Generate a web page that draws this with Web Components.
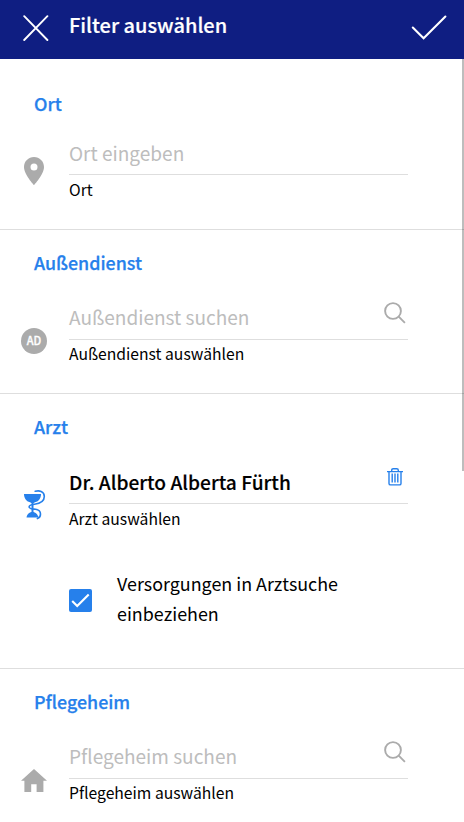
<!DOCTYPE html>
<html lang="de">
<head>
<meta charset="utf-8">
<title>Filter auswählen</title>
<style>
html,body{margin:0;height:100%;overflow:hidden;background:#fff}
body{font-family:"Noto Sans CJK SC","Noto Sans",sans-serif;color:#000}
</style>
</head>
<body>
<filter-page></filter-page>
<script>
const define=(name,html)=>{
  const t=document.createElement('template');
  t.innerHTML=html;
  customElements.define(name,class extends HTMLElement{
    constructor(){super();this.attachShadow({mode:'open'}).append(t.content.cloneNode(true));}
  });
};

define('app-bar',`<style>
:host{display:flex;height:59px;background:#0f1e82;color:#fff;box-sizing:border-box;padding:0 17px 0 23px}
svg{display:block;flex:none}
.close{margin-top:15px}
.ok{margin:15px 0 0 auto}
.t{margin-left:20px;margin-top:9px;font-size:20px;line-height:32px;font-weight:500;-webkit-text-stroke:.2px;white-space:nowrap}
</style>
<svg class="close" width="26" height="26" viewBox="0 0 26 26" fill="none" stroke="#fff" stroke-width="1.9" stroke-linecap="round"><path d="M1.2 1.2 24.4 25M24.4 1.2 1.2 25"/></svg>
<span class="t"><slot></slot></span>
<svg class="ok" width="36" height="26" viewBox="0 0 36 26" fill="none" stroke="#fff" stroke-width="2.1" stroke-linecap="round"><path d="M1.8 12.6 12.6 23.3 34.4 1.5"/></svg>`);

define('filter-section',`<style>
:host{display:block;padding:20px 0 27px;border-bottom:1px solid #dedede}
.h{padding:0 0 1px 34px;font-size:17.85px;line-height:24px;height:24px;font-weight:500;-webkit-text-stroke:.25px;color:#2680eb;white-space:nowrap}
</style><div class="h"><slot name="title"></slot></div><slot></slot>`);

define('filter-field',`<style>
:host{display:grid;grid-template-columns:69px 339px;margin-top:22px}
.icon{padding-top:var(--icon-top,32px);padding-left:var(--icon-left,21px)}
.input{display:flex;height:var(--input-h,42px);border-bottom:1px solid #dedede;align-items:center;justify-content:space-between;font-size:19.05px;line-height:28px;color:#bdbdbd;white-space:nowrap}
.text{padding-bottom:2px}
:host([filled]) .input{color:#000;font-weight:500;font-size:19.15px;-webkit-text-stroke:.15px}
:host([filled]) .text{padding-bottom:0}
.hint{margin-top:var(--hint-gap,2px);font-size:15.7px;line-height:24px;height:24px;white-space:nowrap}
</style>
<div class="icon"><slot name="icon"></slot></div>
<div><div class="input"><span class="text"><slot></slot></span><slot name="action"></slot></div><div class="hint"><slot name="hint"></slot></div></div>`);

define('icon-pin',`<style>:host,svg{display:block}</style>
<svg width="20" height="28" viewBox="0 0 20 28"><path fill="#ababab" fill-rule="evenodd" d="M10 0C4.4 0 0 4.4 0 9.9 0 17.3 10 28 10 28s10-10.7 10-18.1C20 4.4 15.6 0 10 0Zm0 13.4a3.5 3.5 0 1 1 0-7 3.5 3.5 0 0 1 0 7Z"/></svg>`);

define('icon-badge',`<style>:host{display:flex;width:26px;height:26px;border-radius:50%;background:#ababab;color:#fff;font-size:11px;line-height:25px;font-weight:500;-webkit-text-stroke:.3px;align-items:center;justify-content:center}span{height:26px}</style><span><slot></slot></span>`);

define('icon-cup',`<style>:host,svg{display:block}</style>
<svg width="22" height="30" viewBox="0 0 22 30"><g fill="#2680eb"><path d="M0 4H17C17 8 15.2 11.3 11 12.3L9.7 13H7.3L6 12.3C2 11.3 0 8 0 4Z"/><path d="M7.5 12h2v11h-2z"/><path d="M2.5 27.5C2.8 24.5 5 22 8.4 22s5.6 2.5 5.9 5.5Z"/></g><path fill="none" stroke="#2680eb" stroke-width="1.6" stroke-linecap="round" d="M11.2 1.3C15 .3 20.3 .9 20.3 6.4 20.3 11.8 15 13.6 10.5 14.2 6.8 14.7 5 15.4 5.1 17 5.3 19 8.5 18.9 11.5 19.3 14.7 19.8 16.5 21.2 16.5 24 16.5 26.3 15.3 28 13.4 28.6"/></svg>`);

define('icon-home',`<style>:host,svg{display:block}</style>
<svg width="26" height="23" viewBox="0 0 26 23"><path fill="#ababab" d="M13 0 0 11.7H3.4V23h6.8v-7.8h5.4V23h6.8V11.7H26Z"/></svg>`);

define('icon-search',`<style>:host{display:block;margin:-10px 2px 0 0}svg{display:block}</style>
<svg width="22" height="22" viewBox="0 0 22 22" fill="none" stroke="#ababab" stroke-width="1.9"><circle cx="9" cy="9" r="7.9"/><path d="m14.7 14.7 6.2 6.2"/></svg>`);

define('icon-trash',`<style>:host{display:block;margin:-10px 5px 0 0}svg{display:block}</style>
<svg width="16" height="18" viewBox="0 0 16 18" fill="none" stroke="#2680eb" stroke-width="1.4"><path d="M0 3.6h16M4.7 3.6V2.2Q4.7.7 6.2.7h3.6q1.5 0 1.5 1.5v1.4M2 3.6v11.8q0 1.5 1.5 1.5h9q1.5 0 1.5-1.5V3.6M5.2 5.6v8.8M8 5.6v8.8M10.8 5.6v8.8"/></svg>`);

define('check-option',`<style>
:host{display:flex;margin:37px 0 11px;padding-left:69px;align-items:center;font-size:17.9px;line-height:30px}
svg{display:block;flex:none;margin-right:25px;margin-top:1px}
.l{width:250px;padding-bottom:2px;margin-top:0}
svg{margin-top:3px}
</style>
<svg width="23" height="23" viewBox="0 0 23 23"><rect width="23" height="23" rx="2" fill="#2680eb"/><path d="m3.2 12 5 5L19.7 5.6" fill="none" stroke="#fff" stroke-width="2.1"/></svg><div class="l"><slot></slot></div>`);

define('scroll-thumb',`<style>:host{position:absolute;right:0;top:59px;width:2px;height:412px;background:rgba(0,0,0,.26)}</style>`);

define('filter-page',`<style>
:host{display:block;position:relative;height:822px;overflow:hidden}
.first{padding-top:32px}
.place{margin-top:18px;--input-h:40px;--icon-top:23px;--icon-left:24px;--hint-gap:3px}
.badge{--icon-top:31px}
.doctor{--icon-left:24px;--icon-top:29px;--hint-gap:3px}
.home{--icon-top:33px}
</style>
<app-bar>Filter auswählen</app-bar>
<filter-section class="first"><span slot="title">Ort</span>
<filter-field class="place"><icon-pin slot="icon"></icon-pin>Ort eingeben<span slot="hint">Ort</span></filter-field></filter-section>
<filter-section><span slot="title">Außendienst</span>
<filter-field class="badge"><icon-badge slot="icon">AD</icon-badge>Außendienst suchen<icon-search slot="action"></icon-search><span slot="hint">Außendienst auswählen</span></filter-field></filter-section>
<filter-section><span slot="title">Arzt</span>
<filter-field class="doctor" filled><icon-cup slot="icon"></icon-cup>Dr. Alberto Alberta Fürth<icon-trash slot="action"></icon-trash><span slot="hint">Arzt auswählen</span></filter-field>
<check-option>Versorgungen in Arztsuche einbeziehen</check-option></filter-section>
<filter-section><span slot="title">Pflegeheim</span>
<filter-field class="home"><icon-home slot="icon"></icon-home>Pflegeheim suchen<icon-search slot="action"></icon-search><span slot="hint">Pflegeheim auswählen</span></filter-field></filter-section>
<scroll-thumb></scroll-thumb>`);
</script>
</body>
</html>
